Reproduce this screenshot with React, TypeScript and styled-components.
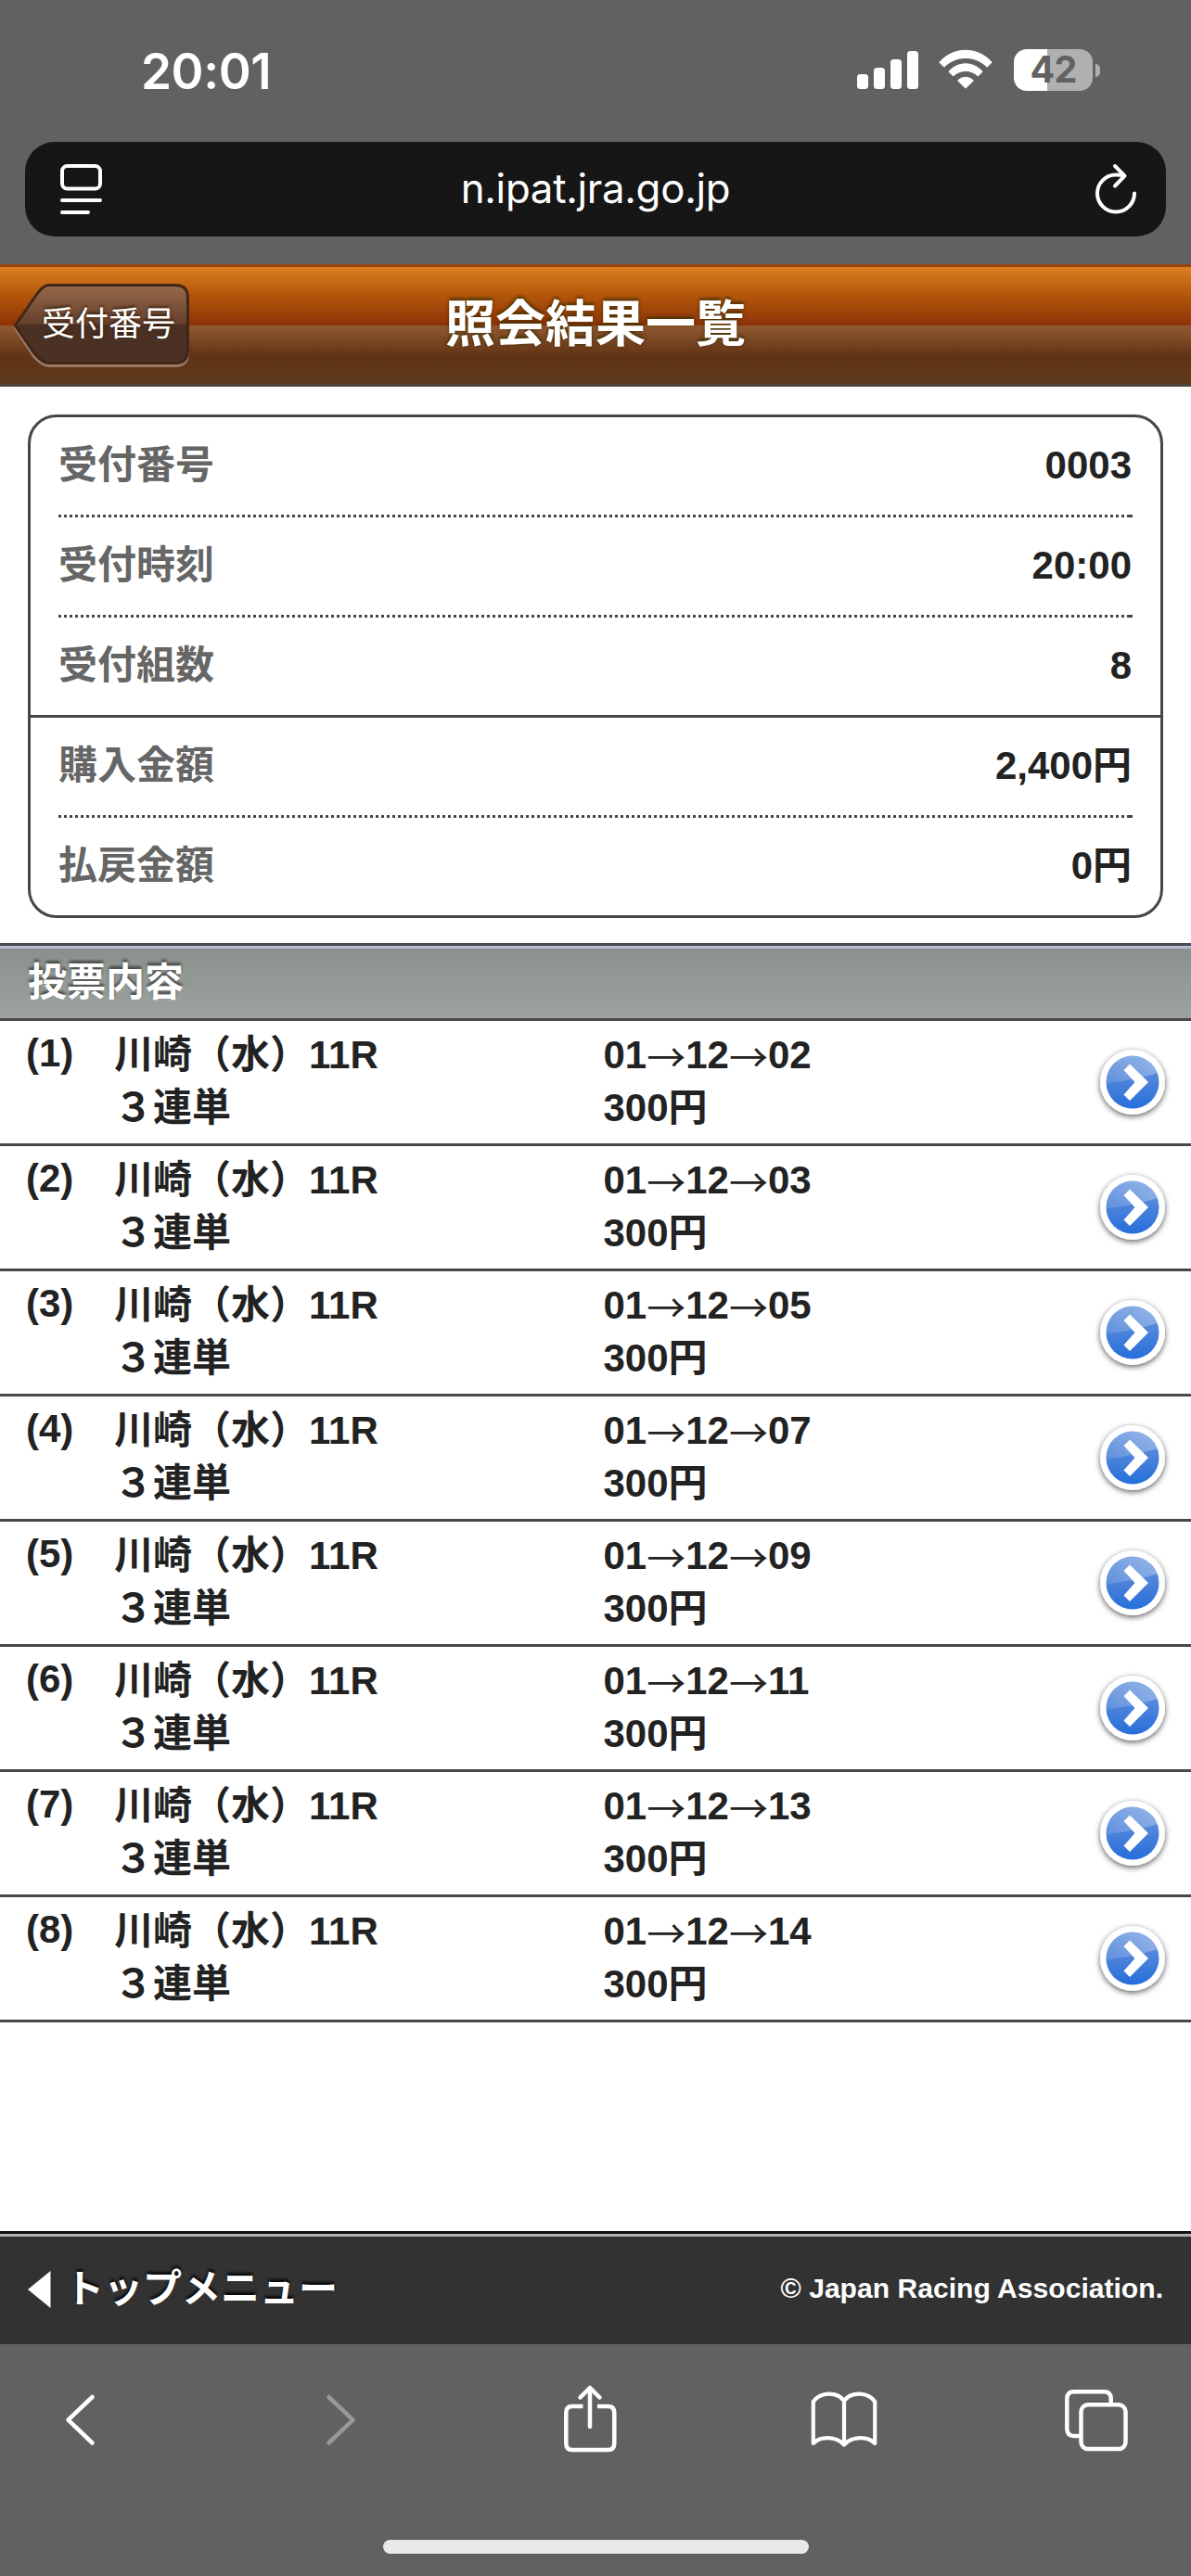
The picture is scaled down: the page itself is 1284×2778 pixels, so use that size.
import React from "react";
import styled, { createGlobalStyle } from "styled-components";

const webFont = `"Liberation Sans", "Noto Sans CJK JP", sans-serif`;
const systemFont = `Inter, "Noto Sans CJK JP", sans-serif`;

const GlobalStyle = createGlobalStyle`
  *, *::before, *::after { box-sizing: border-box; }
  body { margin: 0; background: #fff; }
  svg { display: block; flex: none; overflow: visible; }
`;

const Screen = styled.div`
  width: 1284px;
  height: 2778px;
  display: flex;
  flex-direction: column;
  overflow: hidden;
  background: #fff;
  font-family: ${webFont};
  color: #222;
`;

const BrowserTop = styled.header`
  height: 285px;
  background: #616161;
  font-family: ${systemFont};
  color: #fff;
`;

const StatusBar = styled.div`
  height: 153px;
  display: flex;
  justify-content: space-between;
  padding: 0 98px 0 152px;
`;

const Clock = styled.time`
  font-size: 53px;
  font-weight: 600;
  line-height: 154px;
  letter-spacing: -0.4px;
`;

const StatusIcons = styled.div`
  display: flex;
  align-items: flex-start;
  padding-top: 53px;
`;

const SignalBars = styled.div`
  display: flex;
  align-items: flex-end;
  gap: 6px;
  height: 43px;
  margin-right: 22px;
`;

const SignalBar = styled.i<{ $height: number }>`
  width: 12px;
  height: ${(p) => p.$height}px;
  border-radius: 3.5px;
  background: #fff;
`;

const BatteryBody = styled.div`
  width: 85px;
  height: 45px;
  margin: 0 3px 0 23px;
  border-radius: 14px;
  background: linear-gradient(90deg, #fff 36px, #b0b0b0 36px);
  color: #626262;
  font-size: 39.5px;
  font-weight: 700;
  line-height: 45px;
  letter-spacing: -0.8px;
  text-align: center;
`;

const BatteryTip = styled.i`
  width: 5px;
  height: 14px;
  margin-top: 16px;
  border-radius: 0 5px 5px 0;
  background: #b0b0b0;
`;

const AddressBar = styled.div`
  height: 102px;
  margin: 0 27px;
  padding: 0 32px 0 38px;
  display: flex;
  align-items: center;
  justify-content: space-between;
  border-radius: 32px;
  background: #161616;
`;

const Address = styled.span`
  margin-right: 7px;
  font-size: 43.8px;
  line-height: 102px;
  letter-spacing: -0.3px;
`;

const TitleBar = styled.div`
  height: 132px;
  display: grid;
  grid-template-columns: 240px 1fr 240px;
  border-top: 3px solid #9a430e;
  border-bottom: 3px solid #4d4439;
  background: linear-gradient(
    #d9801f 0,
    #b6590b 28px,
    #8d3308 63px,
    #925a31 63px,
    #613315 96px,
    #5d391c 126px
  );
`;

const BackButton = styled.button`
  width: 192px;
  height: 94px;
  margin: 17px 0 0 14px;
  padding: 0;
  display: grid;
  border: 0;
  background: none;
  font-family: ${webFont};
  color: #fff;

  > * { grid-area: 1 / 1; }
`;

const BackLabel = styled.span`
  padding-left: 31px;
  font-size: 36px;
  line-height: 89px;
  text-align: left;
  text-shadow: 0 -2px 3px rgba(40, 20, 0, 0.75);
`;

const Title = styled.h1`
  margin: 0;
  font-size: 54px;
  font-weight: 700;
  line-height: 125px;
  text-align: center;
  color: #fff;
  text-shadow: 0 -3px 3px rgba(60, 50, 0, 0.6), 0 0 4px rgba(60, 45, 0, 0.55);
`;

const Summary = styled.dl`
  margin: 30px 30px 27px;
  border: 3px solid #464646;
  border-radius: 31px;
`;

const SummaryRow = styled.div<{ $divider: "dotted" | "solid" | "none" }>`
  height: ${(p) => (p.$divider === "none" ? 105 : 108)}px;
  padding: 0 30px;
  display: flex;
  justify-content: space-between;
  font-size: 42px;
  font-weight: 700;
  line-height: 104px;
  ${(p) => p.$divider === "solid" && `border-bottom: 3px solid #464646;`}
  ${(p) =>
    p.$divider === "dotted" &&
    `background:
      linear-gradient(#464646, #464646) calc(100% - 30px) 100% / 3px 3px no-repeat,
      repeating-linear-gradient(90deg, #464646 0 3px, transparent 3px 6px) 30px 100% / calc(100% - 60px) 3px no-repeat;`}
`;

const SummaryLabel = styled.dt`
  color: #666;
`;

const SummaryValue = styled.dd`
  margin: 0 1px 0 0;
`;

const SectionHeading = styled.h2`
  height: 84px;
  margin: 0;
  padding-left: 30px;
  border-top: 3px solid #494850;
  border-bottom: 3px solid #494a47;
  background: linear-gradient(#b5bccf 3px, #8a908c 3px, #9da4a0 78px);
  font-size: 42px;
  font-weight: 700;
  line-height: 79px;
  color: #fff;
  text-shadow: 0 -3px 3px rgba(0, 0, 0, 0.5);
`;

const BetList = styled.ol`
  flex: 1;
  margin: 0;
  padding: 0;
  list-style: none;
`;

const BetRow = styled.li`
  height: 135px;
  padding: 8px 28px 0 28px;
  display: grid;
  grid-template-columns: 95px 527.5px 1fr auto;
  border-bottom: 3px solid #494747;
  font-size: 42px;
  font-weight: 700;
  line-height: 57px;
`;

const BetIndex = styled.span`
  line-height: 53px;
`;

const BetLines = styled.div`
  display: flex;
  flex-direction: column;
`;

const BetLine = styled.span`
  height: 57px;
`;

const Arrow = styled.span`
  font-family: "Noto Sans CJK JP", sans-serif;
  font-weight: 400;
  line-height: 1;
  vertical-align: -4px;
`;

const DetailLink = styled.a`
  height: 116px;
  display: flex;
  align-items: center;
`;

const PageFooter = styled.footer`
  height: 122px;
  padding: 0 30px;
  display: flex;
  justify-content: space-between;
  border-top: 3px solid #131113;
  background: linear-gradient(#b3afb3 3px, #323232 3px);
  color: #fff;
  font-weight: 700;
`;

const TopMenuLink = styled.a`
  display: flex;
  align-items: center;
  gap: 15px;
  font-size: 42px;
  line-height: 119px;
  text-shadow: 0 -3px 3px rgba(0, 0, 0, 0.85);
`;

const Copyright = styled.small`
  font-size: 30.1px;
  line-height: 117px;
`;

const Toolbar = styled.nav`
  height: 250px;
  padding-top: 40px;
  display: flex;
  flex-direction: column;
  justify-content: space-between;
  align-items: center;
  background: #616161;
`;

const ToolbarIcons = styled.div`
  width: 100%;
  padding-left: 66px;
  display: grid;
  grid-template-columns: 282px 258px 266.5px 274.5px 1fr;
`;

const HomeIndicator = styled.i`
  width: 459px;
  height: 15px;
  margin-bottom: 24px;
  border-radius: 8px;
  background: #e8e8e8;
`;

const WifiIcon = () => (
  <svg width="58" height="43" viewBox="0 0 58 43" fill="#fff" strokeLinejoin="round">
    <path d="M0.8 14.2C16-3 42-3 57.2 14.2L52.2 19.2C39 6.2 19 6.2 5.8 19.2Z" stroke="#fff" />
    <path d="M10.8 24.2C21 13 37 13 47.2 24.2L42.4 29C34.5 21.6 23.5 21.6 15.6 29Z" stroke="#fff" />
    <path d="M20.6 34C25.4 29 32.6 29 37.4 34L29 42.2Z" stroke="#fff" />
  </svg>
);

const ReaderIcon = () => (
  <svg width="45" height="54" viewBox="0 0 45 54" fill="none" stroke="#fff" strokeWidth="4" strokeLinecap="round">
    <rect x="2" y="2" width="41" height="24.5" rx="5.5" />
    <path d="M2 39H43M2 52H30" />
  </svg>
);

const ReloadIcon = () => (
  <svg width="44" height="54" viewBox="0 0 44 54" fill="none" stroke="#fff" strokeWidth="4" strokeLinecap="round" strokeLinejoin="round">
    <path d="M42 31.5A20 20 0 1 1 22 11.5Q26.500 11.500 31 12.500" />
    <path d="M21 2L31.500 12.700L21 23.500" />
  </svg>
);

const BackShape = () => (
  <svg width="192" height="94" viewBox="14 305 192 94">
    <defs>
      <linearGradient id="backFill" x1="0" y1="0" x2="0" y2="1">
        <stop offset="0" stopColor="#98694b" />
        <stop offset="0.5" stopColor="#633f2b" />
        <stop offset="0.51" stopColor="#4a3023" />
        <stop offset="1" stopColor="#4b3224" />
      </linearGradient>
    </defs>
    <path
      d="M16.500 354L37 321Q46 309.500 52 309.500H189Q202.500 309.500 202.500 323V381Q202.500 394.500 189 394.500H52Q46 394.500 37 385Z"
      fill="none"
      stroke="#9d7965"
      strokeWidth="3"
    />
    <path
      d="M16.500 351L37 321Q46 307.500 52 307.500H189Q202.500 307.500 202.500 321V378Q202.500 391.500 189 391.500H52Q46 391.500 37 381Z"
      fill="url(#backFill)"
      stroke="#40271a"
      strokeWidth="3"
    />
  </svg>
);

const DetailIcon = () => (
  <svg width="70" height="70" viewBox="0 0 70 70">
    <defs>
      <linearGradient id="discFill" x1="0" y1="0" x2="0" y2="1">
        <stop offset="0" stopColor="#6f9be0" />
        <stop offset="0.45" stopColor="#4f84da" />
        <stop offset="1" stopColor="#256fdb" />
      </linearGradient>
      <linearGradient id="glossFill" x1="0" y1="0.3" x2="1" y2="0.5">
        <stop offset="0" stopColor="#fff" stopOpacity="0.06" />
        <stop offset="1" stopColor="#fff" stopOpacity="0.3" />
      </linearGradient>
      <filter id="discShadow" x="-30%" y="-30%" width="160%" height="160%">
        <feDropShadow dx="0" dy="2" stdDeviation="3" floodColor="#000" floodOpacity="0.65" />
      </filter>
      <clipPath id="discClip">
        <circle cx="35" cy="35" r="28.500" />
      </clipPath>
    </defs>
    <circle cx="35" cy="35" r="35" fill="#fff" filter="url(#discShadow)" />
    <circle cx="35" cy="35" r="28.500" fill="url(#discFill)" />
    <path d="M0 37Q34 34 66 24V0H0Z" fill="url(#glossFill)" clipPath="url(#discClip)" />
    <path d="M32 15.500L52 35L32 55L25.500 48.500L37.500 35L25.500 22Z" fill="#fff" />
  </svg>
);

const stroked = {
  fill: "none",
  stroke: "#fff",
  strokeWidth: 4.5,
  strokeLinecap: "round" as const,
  strokeLinejoin: "round" as const,
};

const HistoryBackIcon = () => (
  <svg width="40" height="84" viewBox="66 2568 40 84" {...stroked}>
    <path d="M99.500 2585L73.500 2609.700L99.500 2634.500" />
  </svg>
);

const HistoryForwardIcon = () => (
  <svg width="40" height="84" viewBox="348 2568 40 84" {...stroked} stroke="#989898">
    <path d="M354.500 2585L380.500 2609.700L354.500 2634.500" />
  </svg>
);

const ShareIcon = () => (
  <svg width="60" height="84" viewBox="606 2568 60 84" {...stroked}>
    <path d="M636 2617V2575.500M625.500 2585.500L636 2575L646.500 2585.500" />
    <path d="M628.500 2595H617Q610.300 2595 610.300 2602V2635Q610.300 2642 617 2642H655.500Q662.300 2642 662.300 2635V2602Q662.300 2595 655.500 2595H644" strokeLinecap="butt" />
  </svg>
);

const BookIcon = () => (
  <svg width="74" height="84" viewBox="872.500 2568 74 84" {...stroked} strokeWidth={4.2}>
    <path d="M909.500 2589C902 2579 884 2579 876.300 2590V2635C884 2627 901 2627 909.500 2636.500C918 2627 935 2627 942.700 2635V2590C935 2579 917 2579 909.500 2589V2636" />
  </svg>
);

const TabsIcon = () => (
  <svg width="72" height="84" viewBox="1147 2568 72 84" {...stroked}>
    <path d="M1164 2627H1158Q1150.300 2627 1150.300 2619V2587Q1150.300 2579.300 1158 2579.300H1190Q1197.700 2579.300 1197.700 2587V2592" strokeLinecap="butt" />
    <rect x="1165.500" y="2593.300" width="48" height="47.700" rx="7.500" />
  </svg>
);

const summary: { label: string; value: string; divider: "dotted" | "solid" | "none" }[] = [
  { label: "受付番号", value: "0003", divider: "dotted" },
  { label: "受付時刻", value: "20:00", divider: "dotted" },
  { label: "受付組数", value: "8", divider: "solid" },
  { label: "購入金額", value: "2,400円", divider: "dotted" },
  { label: "払戻金額", value: "0円", divider: "none" },
];

const thirdPlace = ["02", "03", "05", "07", "09", "11", "13", "14"];

export default function App() {
  return (
    <Screen>
      <GlobalStyle />
      <BrowserTop>
        <StatusBar>
          <Clock>20:01</Clock>
          <StatusIcons>
            <SignalBars>
              {[16, 23, 32, 41].map((h) => (
                <SignalBar key={h} $height={h} />
              ))}
            </SignalBars>
            <WifiIcon />
            <BatteryBody>42</BatteryBody>
            <BatteryTip />
          </StatusIcons>
        </StatusBar>
        <AddressBar>
          <ReaderIcon />
          <Address>n.ipat.jra.go.jp</Address>
          <ReloadIcon />
        </AddressBar>
      </BrowserTop>

      <TitleBar>
        <BackButton>
          <BackShape />
          <BackLabel>受付番号</BackLabel>
        </BackButton>
        <Title>照会結果一覧</Title>
      </TitleBar>

      <Summary>
        {summary.map((row) => (
          <SummaryRow key={row.label} $divider={row.divider}>
            <SummaryLabel>{row.label}</SummaryLabel>
            <SummaryValue>{row.value}</SummaryValue>
          </SummaryRow>
        ))}
      </Summary>

      <SectionHeading>投票内容</SectionHeading>
      <BetList>
        {thirdPlace.map((third, i) => (
          <BetRow key={third}>
            <BetIndex>({i + 1})</BetIndex>
            <BetLines>
              <BetLine>川崎（水）11R</BetLine>
              <BetLine>３連単</BetLine>
            </BetLines>
            <BetLines>
              <BetLine>
                01<Arrow>→</Arrow>12<Arrow>→</Arrow>
                {third}
              </BetLine>
              <BetLine>300円</BetLine>
            </BetLines>
            <DetailLink>
              <DetailIcon />
            </DetailLink>
          </BetRow>
        ))}
      </BetList>

      <PageFooter>
        <TopMenuLink>
          <svg width="25" height="40" viewBox="0 0 25 40" fill="#fff">
            <path d="M24.500 0V40L0 20Z" />
          </svg>
          トップメニュー
        </TopMenuLink>
        <Copyright>© Japan Racing Association.</Copyright>
      </PageFooter>

      <Toolbar>
        <ToolbarIcons>
          <HistoryBackIcon />
          <HistoryForwardIcon />
          <ShareIcon />
          <BookIcon />
          <TabsIcon />
        </ToolbarIcons>
        <HomeIndicator />
      </Toolbar>
    </Screen>
  );
}
